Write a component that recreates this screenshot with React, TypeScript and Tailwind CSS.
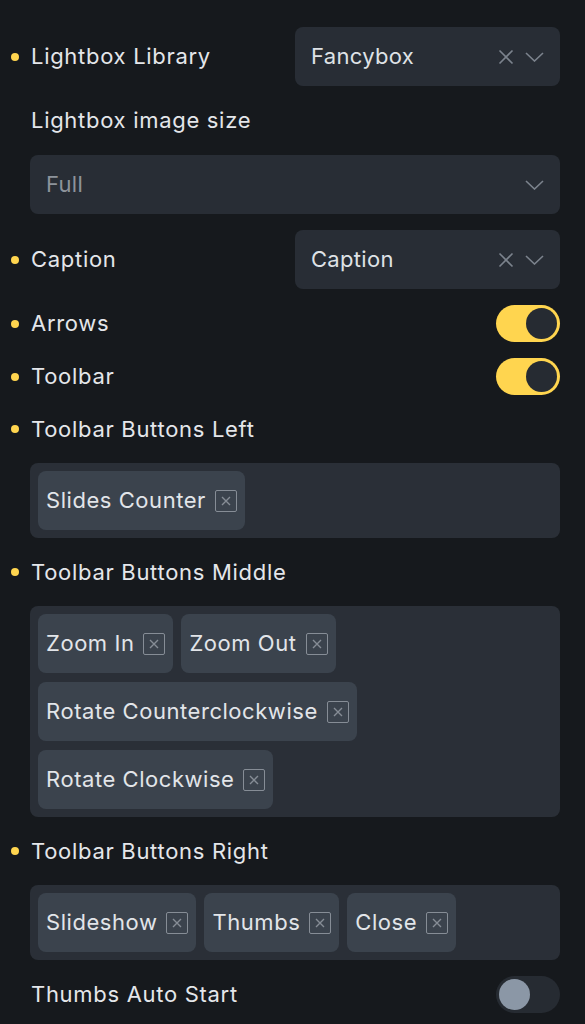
import React from 'react';

const Dot = ({ on }: { on?: boolean }) => (
  <span className={`w-2 h-2 rounded-full mr-3 shrink-0 ${on ? 'bg-[#ffd54f]' : 'bg-transparent'}`} />
);

const Label = ({ text, dot }: { text: string; dot?: boolean }) => (
  <div className="flex items-center h-9 -ml-5">
    <Dot on={dot} />
    <span className="text-[22px] font-normal text-[#e4e6ea] tracking-[0.7px]">{text}</span>
  </div>
);

const XIcon = () => (
  <svg width="16" height="16" viewBox="0 0 16 16" fill="none" stroke="#7c838d" strokeWidth="1.6">
    <path d="M1.5 1.5l13 13M14.5 1.5l-13 13" />
  </svg>
);

const Chevron = () => (
  <svg width="19" height="10" viewBox="0 0 19 10" fill="none" stroke="#7c838d" strokeWidth="1.6">
    <path d="M1 1l8.5 8L18 1" />
  </svg>
);

const Select = ({ value, muted, clear, className }: { value: string; muted?: boolean; clear?: boolean; className?: string }) => (
  <div className={`h-[59px] rounded-lg bg-[#282d35] flex items-center pl-4 pr-4 ${className ?? ''}`}>
    <span className={`flex-1 text-[22px] tracking-[0.3px] ${muted ? 'text-[#8d939b]' : 'text-[#dfe2e6]'}`}>{value}</span>
    {clear && (
      <span className="mr-[11px] flex items-center">
        <XIcon />
      </span>
    )}
    <Chevron />
  </div>
);

const Toggle = ({ on }: { on?: boolean }) =>
  on ? (
    <div className="w-16 h-[37px] rounded-full bg-[#ffd54f] flex items-center justify-end pr-[3px]">
      <div className="w-[31px] h-[31px] rounded-full bg-[#262b32]" />
    </div>
  ) : (
    <div className="w-16 h-[37px] rounded-full bg-[#262b32] flex items-center pl-[3px]">
      <div className="w-[31px] h-[31px] rounded-full bg-[#8b97a6]" />
    </div>
  );

const Tag = ({ text }: { text: string }) => (
  <div className="h-[59px] rounded-lg bg-[#3b434d] flex items-center pl-2 pr-2">
    <span className="text-[22px] text-[#e2e5e9] tracking-[0.55px]">{text}</span>
    <span className="ml-[9px] w-[22px] h-[22px] rounded-[2px] border-[1.5px] border-[#868d96] flex items-center justify-center">
      <svg width="10" height="10" viewBox="0 0 10 10" fill="none" stroke="#868d96" strokeWidth="1.4">
        <path d="M1 1l8 8M9 1l-8 8" />
      </svg>
    </span>
  </div>
);

const TagBox = ({ tags }: { tags: string[] }) => (
  <div className="rounded-lg bg-[#2a2f37] p-2 flex flex-wrap gap-x-2 gap-y-[9px]">
    {tags.map((t) => (
      <Tag key={t} text={t} />
    ))}
  </div>
);

export default function App() {
  return (
    <div
      className="min-h-[1024px] bg-[#16191d] pl-[31px] pr-[25px] pt-[27px] flex flex-col gap-4"
      style={{ fontFamily: 'Inter, "Noto Sans", sans-serif' }}
    >
      <div className="flex items-center justify-between">
        <Label text="Lightbox Library" dot />
        <Select value="Fancybox" clear className="w-[265px]" />
      </div>
      <Label text="Lightbox image size" />
      <Select value="Full" muted className="-ml-px mt-px" />
      <div className="flex items-center justify-between">
        <Label text="Caption" dot />
        <Select value="Caption" clear className="w-[265px]" />
      </div>
      <div className="flex items-center justify-between">
        <Label text="Arrows" dot />
        <Toggle on />
      </div>
      <div className="flex items-center justify-between">
        <Label text="Toolbar" dot />
        <Toggle on />
      </div>
      <Label text="Toolbar Buttons Left" dot />
      <div className="-ml-px">
        <TagBox tags={['Slides Counter']} />
      </div>
      <Label text="Toolbar Buttons Middle" dot />
      <div className="-ml-px">
        <TagBox tags={['Zoom In', 'Zoom Out', 'Rotate Counterclockwise', 'Rotate Clockwise']} />
      </div>
      <Label text="Toolbar Buttons Right" dot />
      <div className="-ml-px">
        <TagBox tags={['Slideshow', 'Thumbs', 'Close']} />
      </div>
      <div className="flex items-center justify-between">
        <Label text="Thumbs Auto Start" />
        <Toggle />
      </div>
    </div>
  );
}
